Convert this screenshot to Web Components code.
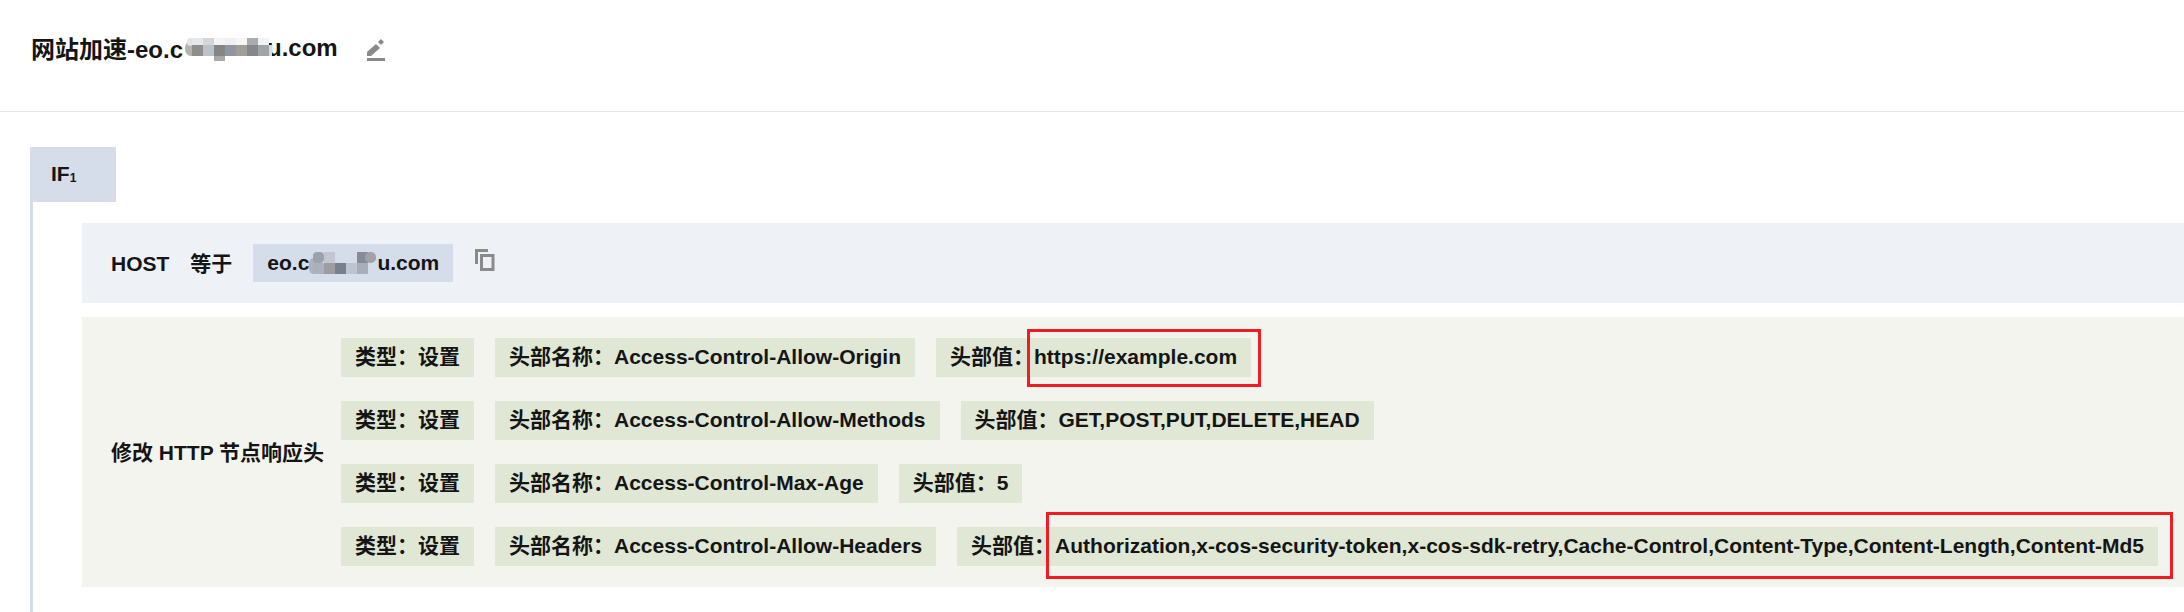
<!DOCTYPE html>
<html lang="zh">
<head>
<meta charset="utf-8">
<style>
  html, body { margin: 0; padding: 0; background: #fff; overflow: hidden; }
  body {
    width: 2184px;
    height: 612px;
    color: #151515;
    font: bold 21px "Liberation Sans", "Noto Sans CJK SC", sans-serif;
  }
</style>
</head>
<body>
<script>
// small blurred patch, cells are [x, y, w, h, colour, radius]
class MosaicPatch extends HTMLElement {
  connectedCallback() {
    const w = this.getAttribute('w');
    const h = this.getAttribute('h');
    const cells = JSON.parse(this.getAttribute('cells') || '[]');
    this.attachShadow({mode: 'open'}).innerHTML = `
      <style>
        :host { display: block; flex: none; position: relative; width: ${w}px; height: ${h}px; }
        svg { display: block; }
      </style>
      <svg width="${w}" height="${h}">
        ${cells.map(c => `<rect x="${c[0]}" y="${c[1]}" width="${c[2]}" height="${c[3]}" fill="${c[4]}" rx="${c[5] || 0}"/>`).join('')}
      </svg>`;
  }
}
customElements.define('mosaic-patch', MosaicPatch);

class PageHeader extends HTMLElement {
  connectedCallback() {
    this.attachShadow({mode: 'open'}).innerHTML = `
      <style>
        :host { display: flex; align-items: center; box-sizing: border-box; height: 112px; padding: 0 0 16px 31px; border-bottom: 1px solid #e7e7e7; }
        .title { font-size: 24px; white-space: nowrap; display: flex; align-items: center; }
        svg { margin: 5px 0 0 29px; display: block; }
      </style>
      <div class="title"><slot></slot></div>
      <svg width="18" height="22" viewBox="0 0 18 22" fill="#8a8a8a">
        <path d="M0 19h18v3H0z"/>
        <path d="M0 17v-4l9-8 4 4-9 8z"/>
        <path d="M11 3l3-3 3 3-3 3z"/>
      </svg>`;
  }
}
customElements.define('page-header', PageHeader);

class IfBlock extends HTMLElement {
  connectedCallback() {
    this.attachShadow({mode: 'open'}).innerHTML = `
      <style>
        :host { display: block; margin: 35px 0 0 30px; }
        .tab { width: 86px; height: 55px; box-sizing: border-box; padding: 0 0 2px 21px; background: #d5dcea; display: flex; align-items: center; }
        sub { font-size: 12px; vertical-align: baseline; position: relative; top: 1px; }
        .body { border-left: 3px solid #d5dcea; padding: 21px 0 25px 49px; display: flex; flex-direction: column; gap: 14px; }
      </style>
      <div class="tab"><span>IF<sub>1</sub></span></div>
      <div class="body"><slot></slot></div>`;
  }
}
customElements.define('if-block', IfBlock);

class HostRow extends HTMLElement {
  connectedCallback() {
    this.attachShadow({mode: 'open'}).innerHTML = `
      <style>
        :host { display: flex; align-items: center; box-sizing: border-box; height: 80px; padding-left: 29px; background: #eef1f6; }
        .name { padding-bottom: 2px; }
        .chip { display: flex; align-items: center; box-sizing: border-box; height: 38px; margin-left: 21px; padding: 0 14px; background: #d5dcea; white-space: nowrap; }
        svg { margin: 0 0 6px 22px; display: block; }
      </style>
      <span class="name">HOST　等于</span>
      <div class="chip"><slot></slot></div>
      <svg width="20" height="22" viewBox="0 0 20 22" fill="none" stroke="#8a8a8a" stroke-width="3">
        <path d="M1.5 15V1.5H13"/>
        <path d="M6.5 6.5h11.5v14H6.5z"/>
      </svg>`;
  }
}
customElements.define('host-row', HostRow);

class ActionPanel extends HTMLElement {
  connectedCallback() {
    this.attachShadow({mode: 'open'}).innerHTML = `
      <style>
        :host { display: flex; align-items: center; box-sizing: border-box; height: 270px; padding-left: 29px; background: #f2f4ed; white-space: nowrap; }
        .label { width: 230px; flex: none; padding-bottom: 2px; }
        .rows { display: flex; flex-direction: column; gap: 24px; }
      </style>
      <div class="label"><slot name="label"></slot></div>
      <div class="rows"><slot></slot></div>`;
  }
}
customElements.define('action-panel', ActionPanel);

class HeaderRule extends HTMLElement {
  connectedCallback() {
    const name = this.getAttribute('name');
    const value = this.getAttribute('value');
    const box = this.getAttribute('box');
    this.attachShadow({mode: 'open'}).innerHTML = `
      <style>
        :host { display: flex; gap: 21px; }
        .chip { display: block; box-sizing: border-box; height: 39px; line-height: 37px; padding: 0 14px; background: #e0e7d4; white-space: nowrap; }
        .val { position: relative; display: inline-block; height: 39px; vertical-align: top; }
        .mark { position: absolute; box-sizing: border-box; border: 3px solid #ee1c25; pointer-events: none; ${box || ''} }
      </style>
      <span class="chip">类型：设置</span>
      <span class="chip">头部名称：${name}</span>
      <span class="chip">头部值：<span class="val">${value}${box ? '<i class="mark"></i>' : ''}</span></span>`;
  }
}
customElements.define('header-rule', HeaderRule);
</script>

<page-header>网站加速-eo.c<mosaic-patch style="margin: 4px -5px 0 2px" w="87" h="23" cells='[[0,3,12,15,"#b5b3ae",7],[2,0,6,8,"#e2e3e3",4],[7,0,11,7,"#e6e9eb"],[18,0,11,7,"#d5d5d5"],[29,0,11,7,"#f4f4f4"],[40,0,11,7,"#eef0f1"],[51,0,11,7,"#f6f6f6"],[62,0,11,7,"#a9abb0"],[73,0,11,7,"#f2f2f2"],[7,7,11,11,"#8e8e8f"],[18,7,11,11,"#b9c3c8"],[29,7,11,11,"#858585"],[40,7,11,11,"#8f95a2"],[51,7,11,11,"#a09e99"],[62,7,11,11,"#85878c"],[73,7,11,11,"#a2a5a8"],[84,7,3,11,"#dcdcdc"],[29,18,11,5,"#a8a8a8"]]'></mosaic-patch>u.com</page-header>

<if-block>
  <host-row>eo.c<mosaic-patch style="margin-right: 1px" w="67" h="22" cells='[[0,6,8,16,"#adb4bf",6],[4,0,11,11,"#9da1ab",4],[15,0,11,11,"#c2c6d0"],[48,0,11,11,"#868b97"],[56,0,11,11,"#a0a2a8",5],[4,11,11,11,"#a9b1bd"],[15,11,11,11,"#9c9da3"],[26,11,11,11,"#78808e"],[37,11,11,11,"#bfc5d0"],[48,11,11,11,"#a8aeba"]]'></mosaic-patch>u.com</host-row>
  <action-panel>
    <span slot="label">修改 HTTP 节点响应头</span>
    <header-rule name="Access-Control-Allow-Origin" value="https://example.com" box="left:-7px;right:-24px;top:-9px;bottom:-10px;"></header-rule>
    <header-rule name="Access-Control-Allow-Methods" value="GET,POST,PUT,DELETE,HEAD"></header-rule>
    <header-rule name="Access-Control-Max-Age" value="5"></header-rule>
    <header-rule name="Access-Control-Allow-Headers" value="Authorization,x-cos-security-token,x-cos-sdk-retry,Cache-Control,Content-Type,Content-Length,Content-Md5" box="left:-9px;right:-29px;top:-15px;bottom:-13px;"></header-rule>
  </action-panel>
</if-block>
</body>
</html>
